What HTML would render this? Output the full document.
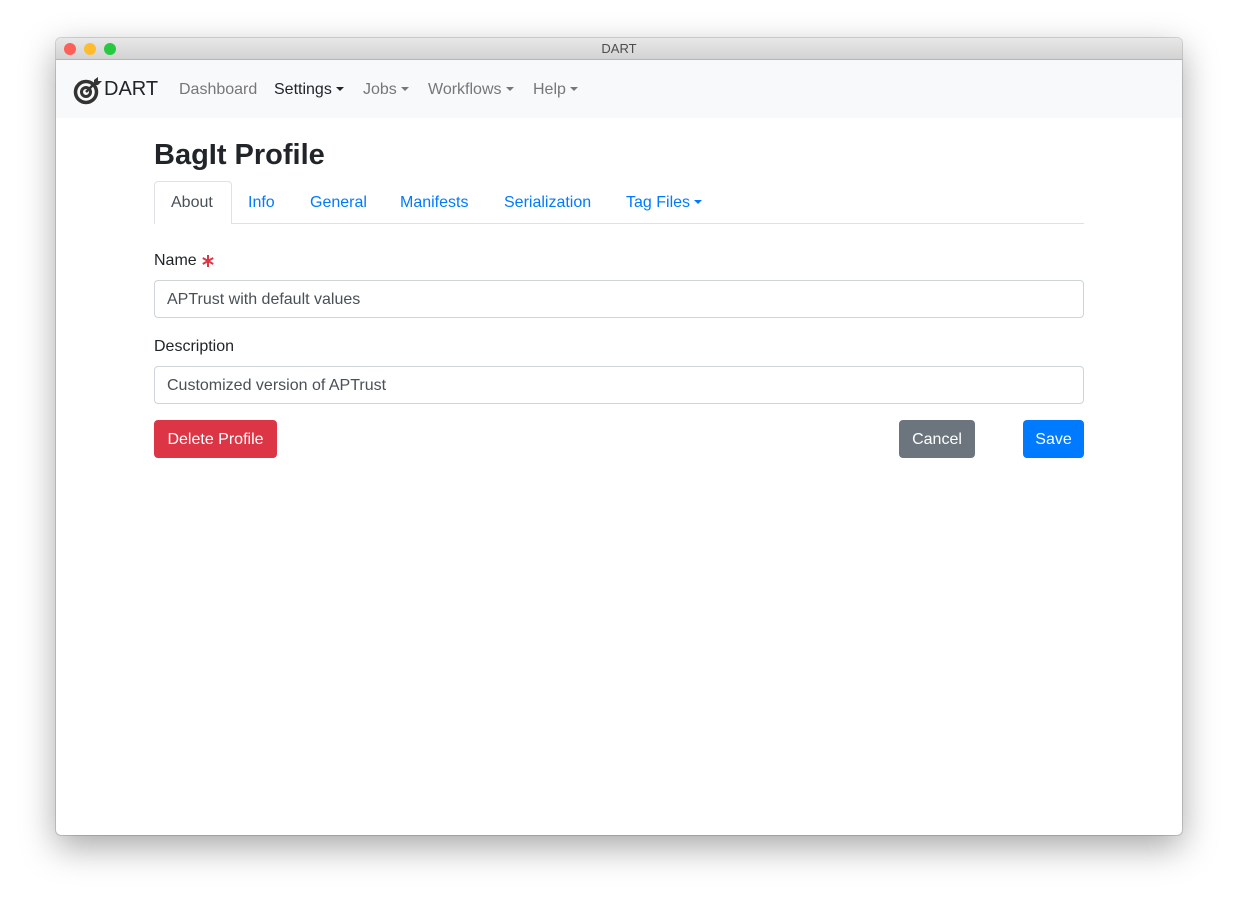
<!DOCTYPE html>
<html><head><style>
*{box-sizing:border-box;margin:0;padding:0}
body{width:1238px;height:909px;background:#fff;font-family:"Liberation Sans",sans-serif;position:relative;overflow:hidden}
.win{position:absolute;left:56px;top:38px;width:1126px;height:797px;background:#fff;border-radius:5px;box-shadow:0 12px 35px rgba(0,0,0,.35),0 0 0 1px rgba(0,0,0,.15);overflow:hidden}
.tb{height:22px;background:linear-gradient(#e8e8e8,#d3d3d3);border-bottom:1px solid #b5b5b5;text-align:center;font-size:13px;line-height:22px;color:#4d4d4d;position:relative}
.dot{position:absolute;top:5px;width:12px;height:12px;border-radius:50%}
.nav{height:58px;background:#f8f9fa;position:relative}
.nav span{position:absolute;top:21px;font-size:16px;color:#777}
.car{display:inline-block;border-left:4px solid transparent;border-right:4px solid transparent;border-top:4.5px solid currentColor;vertical-align:3px;margin-left:4px}
.a{position:absolute}
h1{position:absolute;left:98px;top:101px;font-size:29px;font-weight:bold;color:#212529}
.tabs{position:absolute;left:98px;top:185px;width:930px;height:1px;background:#dee2e6}
.tab{position:absolute;top:156px;font-size:16px;color:#007bff}
.inp{position:absolute;left:98px;width:930px;height:38px;border:1px solid #ced4da;border-radius:4px;font-size:16px;color:#495057;padding:10px 12px 0}
.btn{position:absolute;top:382px;height:38px;border-radius:4px;color:#fff;font-size:16px;line-height:40px;text-align:center}
</style></head><body>
<div class="win">
<div class="tb"><div class="dot" style="left:8px;background:#fe5f57"></div><div class="dot" style="left:28px;background:#febc2e"></div><div class="dot" style="left:48px;background:#28c840"></div>DART</div>
<div class="nav">
<svg class="a" style="left:17px;top:16px" width="30" height="30" viewBox="0 0 30 30"><circle cx="13" cy="16" r="10.5" fill="none" stroke="#333" stroke-width="3.5"/><circle cx="13" cy="16" r="4.5" fill="none" stroke="#333" stroke-width="3"/><path d="M13 16 L24 5" stroke="#333" stroke-width="2.5"/><path d="M21 4 L25 1 L25 5 L29 5 L25 9 L21 9Z" fill="#333"/></svg>
<span style="left:48px;top:18px;font-size:20px;color:#212529">DART</span>
<span style="left:123px">Dashboard</span>
<span style="left:218px;color:#212529">Settings<i class="car"></i></span>
<span style="left:307px">Jobs<i class="car"></i></span>
<span style="left:372px">Workflows<i class="car"></i></span>
<span style="left:477px">Help<i class="car"></i></span>
</div>
<h1>BagIt Profile</h1>
<div class="tabs"></div>
<div class="a" style="left:98px;top:143px;width:78px;height:43px;background:#fff;border:1px solid #dee2e6;border-bottom:none;border-radius:4px 4px 0 0"></div>
<span class="tab" style="left:115px;color:#495057">About</span>
<span class="tab" style="left:192px">Info</span>
<span class="tab" style="left:254px">General</span>
<span class="tab" style="left:344px">Manifests</span>
<span class="tab" style="left:448px">Serialization</span>
<span class="tab" style="left:570px">Tag Files<i class="car"></i></span>
<span class="a" style="left:98px;top:214px;font-size:16px;color:#212529">Name</span>
<svg class="a" style="left:145px;top:216px" width="14" height="14" viewBox="0 0 14 14"><g stroke="#dc3545" stroke-width="2"><path d="M7 1V13M1.8 4L12.2 10M1.8 10L12.2 4"/></g></svg>
<div class="inp" style="top:242px">APTrust with default values</div>
<span class="a" style="left:98px;top:300px;font-size:16px;color:#212529">Description</span>
<div class="inp" style="top:328px">Customized version of APTrust</div>
<div class="btn" style="left:98px;width:123px;background:#dc3545">Delete Profile</div>
<div class="btn" style="left:843px;width:76px;background:#6c757d">Cancel</div>
<div class="btn" style="left:967px;width:61px;background:#007bff">Save</div>
</div>
</body></html>
